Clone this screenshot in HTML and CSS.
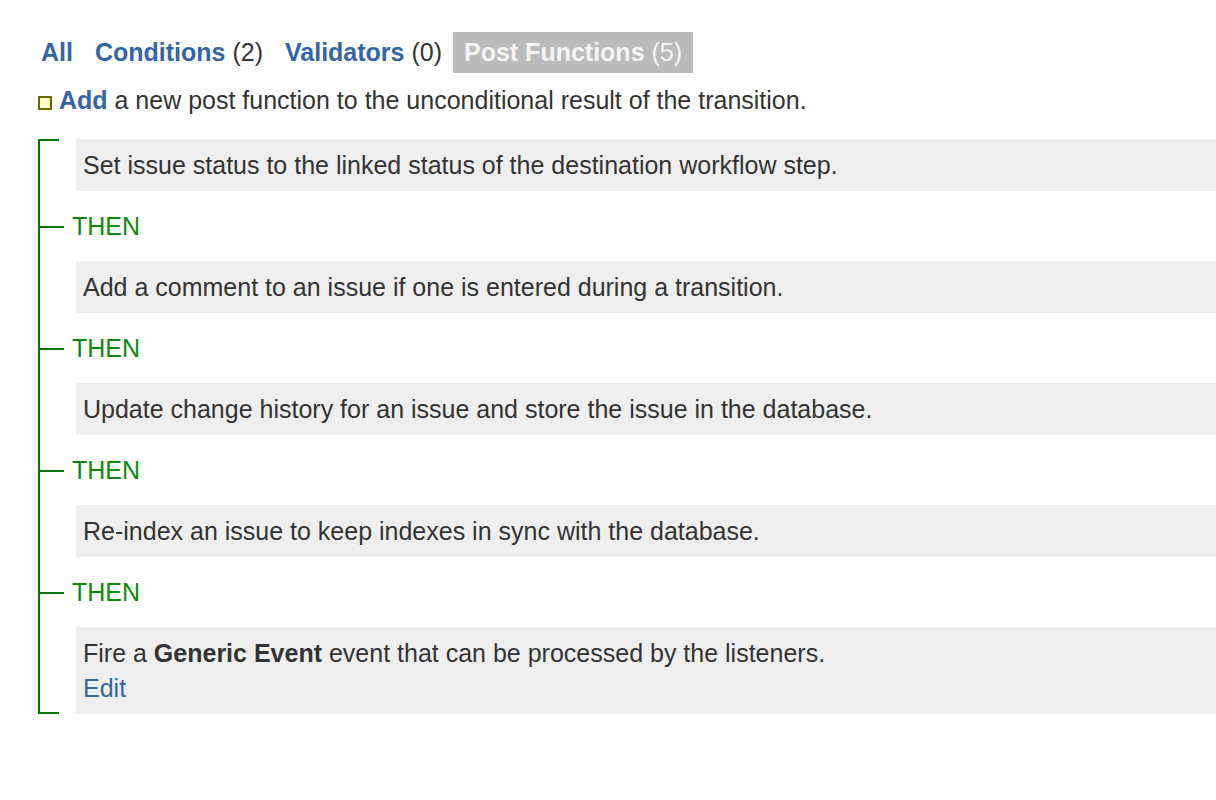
FILE: index.html
```html
<!DOCTYPE html>
<html>
<head>
<meta charset="utf-8">
<link rel="stylesheet" href="styles.css">
</head>
<body>
<div class="page">
  <div class="tabs">
    <a class="tab"><b>All</b></a>
    <a class="tab"><b>Conditions</b> (2)</a>
    <a class="tab"><b>Validators</b> (0)</a>
    <span class="tab active"><b>Post Functions</b> (5)</span>
  </div>
  <div class="add-row"><span class="add-icon"></span> <a class="add-link">Add</a> a new post function to the unconditional result of the transition.</div>
  <div class="chain">
    <div class="func">Set issue status to the linked status of the destination workflow step.</div>
    <div class="then">THEN</div>
    <div class="func">Add a comment to an issue if one is entered during a transition.</div>
    <div class="then">THEN</div>
    <div class="func">Update change history for an issue and store the issue in the database.</div>
    <div class="then">THEN</div>
    <div class="func">Re-index an issue to keep indexes in sync with the database.</div>
    <div class="then">THEN</div>
    <div class="func">Fire a <b>Generic Event</b> event that can be processed by the listeners.<br><a class="edit">Edit</a></div>
  </div>
</div>
</body>
</html>
```

FILE: styles.css
```css
html, body {
  margin: 0;
  padding: 0;
  background: #ffffff;
}
body {
  font-family: "Liberation Sans", Arial, sans-serif;
  font-size: 25px;
  color: #333333;
}
.page {
  padding: 32px 0 0 30px;
}
.tabs {
  display: flex;
  align-items: stretch;
  height: 41px;
}
.tab {
  display: block;
  line-height: 41px;
  padding: 0 11px;
  color: #333333;
  white-space: nowrap;
}
.tab b {
  color: #3465a4;
  font-weight: bold;
}
.tab.active {
  background: #bbbbbb;
  color: #f4f4f4;
}
.tab.active b {
  color: #f4f4f4;
}
.add-row {
  padding-left: 8px;
  height: 54px;
  line-height: 54px;
  white-space: nowrap;
}
.add-icon {
  display: inline-block;
  width: 10px;
  height: 10px;
  border: 2px solid #6b6b00;
  background: #ffffcc;
  vertical-align: -1px;
}
.add-link {
  color: #3465a4;
  font-weight: bold;
}
.chain {
  position: relative;
  margin: 12px 0 0 8px;
  border-left: 2px solid #007a00;
  padding: 0 0 0 36px;
}
.chain::before, .chain::after {
  content: "";
  position: absolute;
  left: 0;
  width: 19px;
  height: 2px;
  background: #007a00;
}
.chain::before { top: 0; }
.chain::after { bottom: 0; }
.func {
  background: #efefef;
  padding: 9px 7px 8px;
  line-height: 35px;
}
.then {
  position: relative;
  height: 70px;
  line-height: 70px;
  color: #0a8a0a;
  margin-left: -4px;
}
.then::before {
  content: "";
  position: absolute;
  left: -34px;
  top: 35px;
  width: 26px;
  height: 2px;
  background: #007a00;
}
.edit {
  color: #3465a4;
}
```
